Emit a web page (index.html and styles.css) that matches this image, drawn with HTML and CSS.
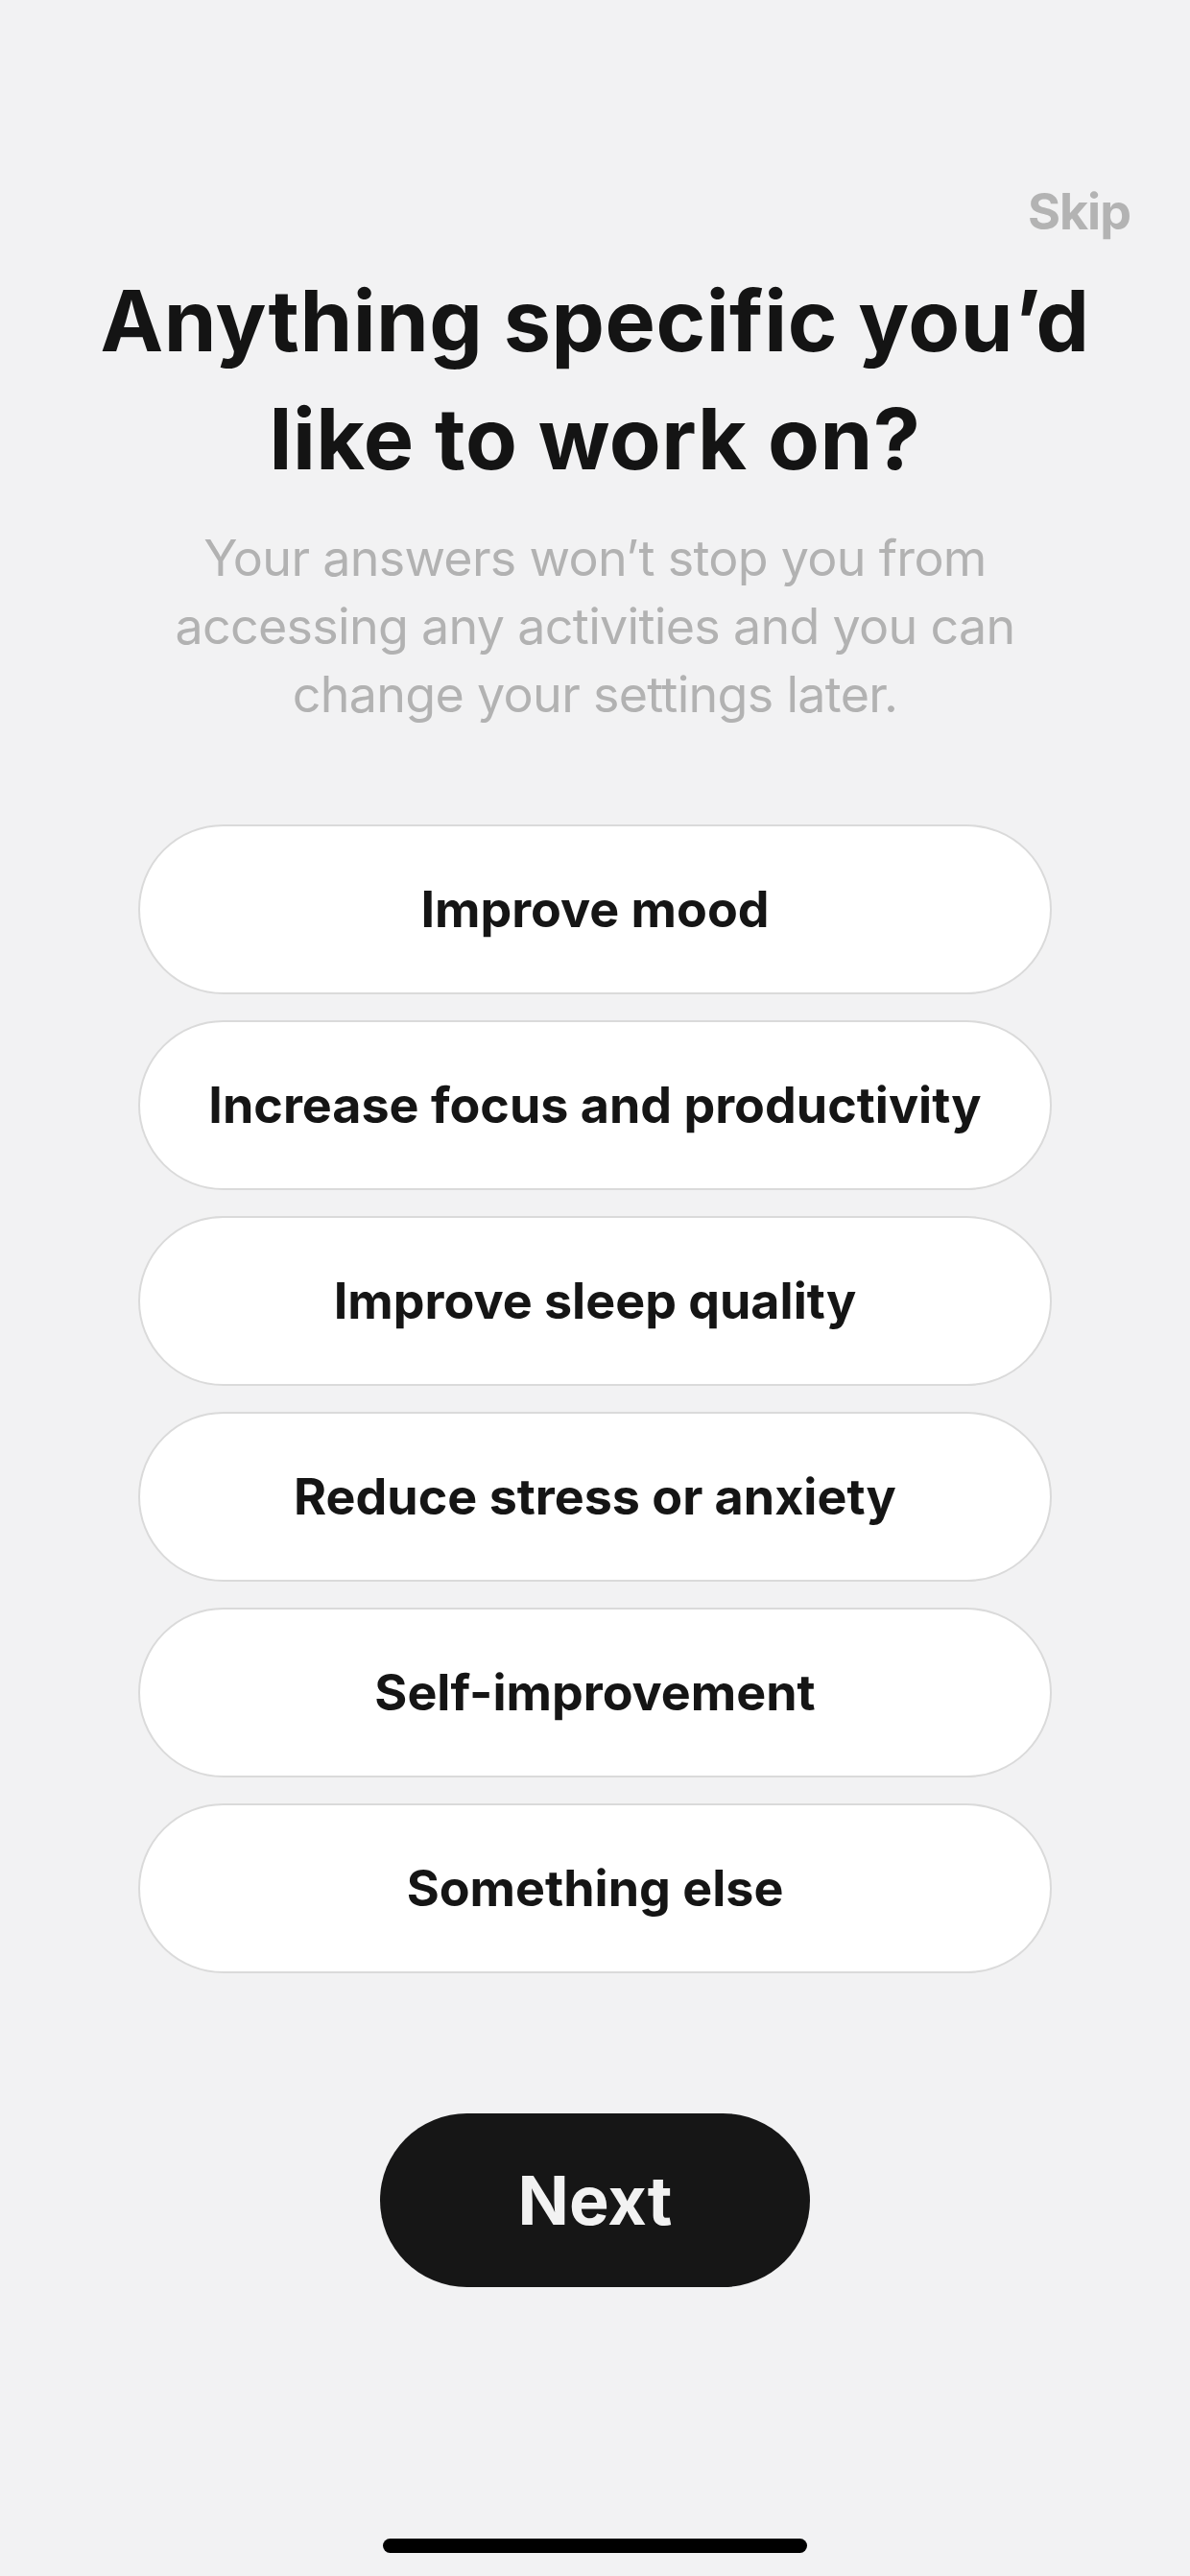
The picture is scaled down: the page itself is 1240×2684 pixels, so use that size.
FILE: index.html
```html
<!DOCTYPE html>
<html lang="en">

<head>
    <meta charset="UTF-8">
    <meta name="viewport" content="width=device-width, initial-scale=1.0">
    <title>Anything specific you'd like to work on?</title>
    <link rel="stylesheet" href="styles.css">
</head>

<body>
    <main class="screen">
        <div class="topbar">
            <a href="#" class="skip">Skip</a>
        </div>

        <h1 class="title">Anything specific you’d<br>like to work on?</h1>
        <p class="subtitle">Your answers won’t stop you from<br>accessing any activities and you can<br>change your settings later.</p>

        <div class="options">
            <button type="button" class="option">Improve mood</button>
            <button type="button" class="option">Increase focus and productivity</button>
            <button type="button" class="option">Improve sleep quality</button>
            <button type="button" class="option">Reduce stress or anxiety</button>
            <button type="button" class="option">Self-improvement</button>
            <button type="button" class="option">Something else</button>
        </div>

        <button type="button" class="next">Next</button>

        <div class="home-indicator"></div>
    </main>
</body>

</html>
```

FILE: styles.css
```css
body {
    background-color: #f2f2f3;
    font-family: Inter, "Noto Sans", sans-serif;
    margin: 0;
}

.screen {
    align-items: center;
    display: flex;
    flex-direction: column;
    min-height: 2684px;
    box-sizing: border-box;
    padding-bottom: 24px;
}

.topbar {
    align-self: stretch;
    display: flex;
    justify-content: flex-end;
    padding: 190px 62px 0;
}

.skip {
    color: #b3b3b3;
    font-size: 52px;
    font-weight: 700;
    letter-spacing: -1px;
    line-height: 62px;
    text-decoration: none;
}

.title {
    color: #141414;
    font-size: 88px;
    font-weight: 700;
    letter-spacing: 0.5px;
    line-height: 123px;
    margin: 21px 0 0;
    text-align: center;
}

.subtitle {
    color: #b2b2b2;
    font-size: 52px;
    font-weight: 400;
    letter-spacing: -0.7px;
    line-height: 71px;
    margin: 27px 0 0;
    text-align: center;
}

.options {
    display: flex;
    flex-direction: column;
    gap: 27px;
    margin-top: 100px;
    width: 952px;
}

.option {
    background-color: white;
    border: 2px solid #dadada;
    border-radius: 90px;
    color: #151515;
    font-family: inherit;
    font-size: 52px;
    font-weight: 700;
    height: 177px;
    letter-spacing: 0;
}

.next {
    background-color: #161616;
    border: none;
    border-radius: 91px;
    color: #f2f2f2;
    font-family: inherit;
    font-size: 70px;
    font-weight: 700;
    height: 181px;
    margin-top: 146px;
    width: 448px;
}

.home-indicator {
    background-color: #000;
    border-radius: 8px;
    height: 15px;
    margin-top: auto;
    width: 442px;
}
```
